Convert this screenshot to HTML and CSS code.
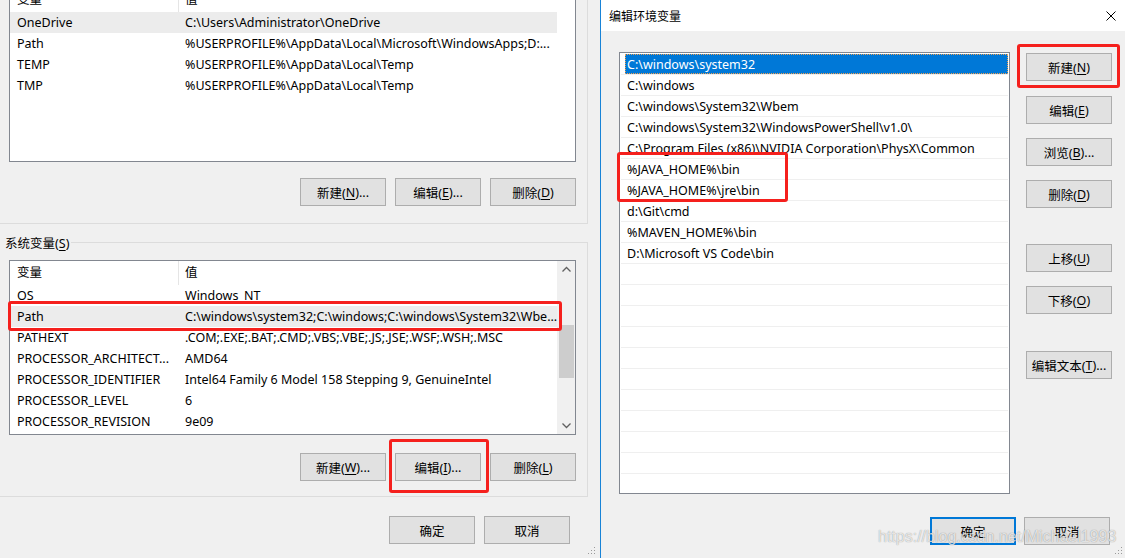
FILE: index.html
```html
<!DOCTYPE html>
<html lang="zh-CN">
<head>
<meta charset="utf-8">
<title>编辑环境变量</title>
<link rel="stylesheet" href="styles.css">
</head>
<body>
<div class="left">
  <div class="group group-user">
    <div class="lv">
      <div class="lv-main">
        <div class="lv-head"><span class="c1 hd">变量</span><span class="c2">值</span></div>
        <div class="lv-row hl"><span class="c1">OneDrive</span><span class="c2">C:\Users\Administrator\OneDrive</span></div>
        <div class="lv-row"><span class="c1">Path</span><span class="c2">%USERPROFILE%\AppData\Local\Microsoft\WindowsApps;D:...</span></div>
        <div class="lv-row"><span class="c1">TEMP</span><span class="c2">%USERPROFILE%\AppData\Local\Temp</span></div>
        <div class="lv-row"><span class="c1">TMP</span><span class="c2">%USERPROFILE%\AppData\Local\Temp</span></div>
      </div>
      <div class="vs-empty"></div>
    </div>
    <div class="btnrow">
      <div class="btn">新建(<u>N</u>)...</div>
      <div class="btn">编辑(<u>E</u>)...</div>
      <div class="btn">删除(<u>D</u>)</div>
    </div>
  </div>

  <div class="group group-sys">
    <div class="legend"><span class="legend-text">系统变量(<u>S</u>)</span><span class="legend-line"></span></div>
    <div class="lv">
      <div class="lv-main">
        <div class="lv-head"><span class="c1 hd">变量</span><span class="c2">值</span></div>
        <div class="lv-row"><span class="c1">OS</span><span class="c2">Windows_NT</span></div>
        <div class="lv-row hl"><span class="c1">Path</span><span class="c2">C:\windows\system32;C:\windows;C:\windows\System32\Wbe...</span></div>
        <div class="lv-row"><span class="c1">PATHEXT</span><span class="c2">.COM;.EXE;.BAT;.CMD;.VBS;.VBE;.JS;.JSE;.WSF;.WSH;.MSC</span></div>
        <div class="lv-row"><span class="c1">PROCESSOR_ARCHITECT...</span><span class="c2">AMD64</span></div>
        <div class="lv-row"><span class="c1">PROCESSOR_IDENTIFIER</span><span class="c2">Intel64 Family 6 Model 158 Stepping 9, GenuineIntel</span></div>
        <div class="lv-row"><span class="c1">PROCESSOR_LEVEL</span><span class="c2">6</span></div>
        <div class="lv-row"><span class="c1">PROCESSOR_REVISION</span><span class="c2">9e09</span></div>
      </div>
      <div class="vscroll">
        <div class="vs-arrow"><svg width="17" height="17" viewBox="0 0 17 17"><polyline points="4.5,10.5 8.5,6.5 12.5,10.5" fill="none" stroke="#606060" stroke-width="1.3"/></svg></div>
        <div class="vs-track"><div class="vs-thumb"></div></div>
        <div class="vs-arrow"><svg width="17" height="17" viewBox="0 0 17 17"><polyline points="4.5,6.5 8.5,10.5 12.5,6.5" fill="none" stroke="#606060" stroke-width="1.3"/></svg></div>
      </div>
    </div>
    <div class="btnrow">
      <div class="btn">新建(<u>W</u>)...</div>
      <div class="btn">编辑(<u>I</u>)...</div>
      <div class="btn">删除(<u>L</u>)</div>
    </div>
  </div>

  <div class="actions">
    <div class="btn">确定</div>
    <div class="btn">取消</div>
  </div>
  <svg class="grip grip-left" width="8" height="8" viewBox="0 0 8 8"><rect x="6" y="0" width="1" height="1" fill="#9a9a9a"/><rect x="3" y="3" width="1" height="1" fill="#9a9a9a"/><rect x="6" y="3" width="1" height="1" fill="#9a9a9a"/><rect x="0" y="6" width="1" height="1" fill="#9a9a9a"/><rect x="3" y="6" width="1" height="1" fill="#9a9a9a"/><rect x="6" y="6" width="1" height="1" fill="#9a9a9a"/></svg>

  <div class="mark mark-path"></div>
  <div class="mark mark-edit"></div>
</div>

<div class="dialog">
  <div class="titlebar">
    <span class="title">编辑环境变量</span>
    <svg class="close" width="10" height="10" viewBox="0 0 10 10"><path d="M0.5 0.5 L9.5 9.5 M9.5 0.5 L0.5 9.5" stroke="#000" stroke-width="1"/></svg>
  </div>
  <div class="dlg-body">
    <div class="dlg-list">
      <div class="row sel"><span class="t">C:\windows\system32</span></div>
      <div class="row"><span class="t">C:\windows</span></div>
      <div class="row"><span class="t">C:\windows\System32\Wbem</span></div>
      <div class="row"><span class="t">C:\windows\System32\WindowsPowerShell\v1.0\</span></div>
      <div class="row"><span class="t">C:\Program Files (x86)\NVIDIA Corporation\PhysX\Common</span></div>
      <div class="row"><span class="t">%JAVA_HOME%\bin</span></div>
      <div class="row"><span class="t">%JAVA_HOME%\jre\bin</span></div>
      <div class="row"><span class="t">d:\Git\cmd</span></div>
      <div class="row"><span class="t">%MAVEN_HOME%\bin</span></div>
      <div class="row"><span class="t">D:\Microsoft VS Code\bin</span></div>
      <div class="row"></div>
      <div class="row"></div>
      <div class="row"></div>
      <div class="row"></div>
      <div class="row"></div>
      <div class="row"></div>
      <div class="row"></div>
      <div class="row"></div>
      <div class="row"></div>
      <div class="row"></div>
      <div class="row"></div>
    </div>
    <div class="side">
      <div class="btn">新建(<u>N</u>)</div>
      <div class="btn gap-1">编辑(<u>E</u>)</div>
      <div class="btn">浏览(<u>B</u>)...</div>
      <div class="btn">删除(<u>D</u>)</div>
      <div class="btn gap-big">上移(<u>U</u>)</div>
      <div class="btn">下移(<u>O</u>)</div>
      <div class="btn gap-big2">编辑文本(<u>T</u>)...</div>
    </div>
  </div>
  <div class="dlg-actions">
    <div class="btn default">确定</div>
    <div class="btn">取消</div>
  </div>
  <svg class="grip grip-right" width="8" height="8" viewBox="0 0 8 8"><rect x="6" y="0" width="1" height="1" fill="#9a9a9a"/><rect x="3" y="3" width="1" height="1" fill="#9a9a9a"/><rect x="6" y="3" width="1" height="1" fill="#9a9a9a"/><rect x="0" y="6" width="1" height="1" fill="#9a9a9a"/><rect x="3" y="6" width="1" height="1" fill="#9a9a9a"/><rect x="6" y="6" width="1" height="1" fill="#9a9a9a"/></svg>
  <div class="watermark">https://blog.csdn.net/Michael1993</div>
  <div class="mark mark-java"></div>
  <div class="mark mark-new"></div>
</div>
</body>
</html>
```

FILE: styles.css
```css
* { box-sizing: border-box; }

html, body {
  margin: 0;
  padding: 0;
}

body {
  width: 1125px;
  height: 558px;
  overflow: hidden;
  display: flex;
  background: #f0f0f0;
  color: #000;
  font-family: "Noto Sans", "Noto Sans CJK SC", sans-serif;
  font-size: 12.5px;
}

u { text-decoration: underline; text-underline-offset: 2px; }

/* ---------- left window ---------- */
.left {
  width: 600px;
  flex: none;
  position: relative;
  background: #f0f0f0;
}

.group {
  width: 588px;
  border-right: 1px solid #dcdcdc;
  border-bottom: 1px solid #dcdcdc;
  padding-left: 9px;
}

.group-user {
  margin-top: -13px;
  padding-bottom: 17px;
}

.group-sys {
  display: flex;
  flex-direction: column;
  margin-top: 18px;
  padding-bottom: 15px;
}

.legend {
  height: 20px;
  margin-top: -10px;
  margin-left: -4px;
  display: flex;
  align-items: center;
}
.legend-text { padding-right: 2px; white-space: nowrap; }
.legend-line { flex: 1; height: 1px; background: #dcdcdc; }

.group-sys .lv { margin-top: 8px; }

.lv {
  width: 567px;
  height: 175px;
  border: 1px solid #828790;
  background: #fff;
  display: flex;
}

.lv-main {
  width: 547px;
  overflow: hidden;
}

.lv-head, .lv-row {
  display: grid;
  grid-template-columns: 169px 1fr;
  white-space: nowrap;
}

.lv-head { height: 24px; line-height: 24px; }
.lv-row { height: 21px; line-height: 21px; }
.lv-row.hl { background: #ececec; }

.c1 { padding-left: 7px; overflow: hidden; }
.c2 { padding-left: 6px; overflow: hidden; }
.c1.hd { border-right: 1px solid #e5e5e5; }

.vs-empty { width: 18px; }

.vscroll {
  width: 18px;
  display: flex;
  flex-direction: column;
  background: #f0f0f0;
  padding-left: 1px;
}
.vs-arrow { height: 17px; display: flex; }
.vs-track { flex: 1; padding-top: 47px; }
.vs-thumb { width: 15px; height: 53px; margin-left: 1px; background: #cdcdcd; }

.btnrow {
  display: flex;
  justify-content: flex-end;
  gap: 9px;
  margin-top: 16px;
  padding-right: 11px;
}
.group-sys .btnrow { margin-top: 18px; }

.btn {
  width: 86px;
  height: 28px;
  flex: none;
  border: 1px solid #adadad;
  background: #e1e1e1;
  display: flex;
  align-items: center;
  justify-content: center;
  white-space: nowrap;
}

.actions {
  display: flex;
  justify-content: flex-end;
  gap: 9px;
  margin-top: 19px;
  padding-right: 30px;
}

.grip { position: absolute; }
.grip-left { right: 4px; bottom: 3px; }
.grip-right { right: 2px; bottom: 3px; }

/* red annotation boxes */
.mark {
  position: absolute;
  border: 3px solid #f5201d;
  border-radius: 3px;
}
.mark-path { left: 8px; top: 301px; width: 554px; height: 30px; }
.mark-edit { left: 389px; top: 439px; width: 100px; height: 54px; }
.mark-java { left: 16px; top: 152px; width: 171px; height: 50px; }
.mark-new  { left: 416px; top: 44px; width: 103px; height: 44px; }

/* ---------- right dialog ---------- */
.dialog {
  width: 525px;
  flex: none;
  position: relative;
  border-left: 1px solid #1883d7;
  background: #f0f0f0;
  display: flex;
  flex-direction: column;
}

.titlebar {
  height: 31px;
  background: #fff;
  display: flex;
  align-items: center;
  padding-left: 8px;
  padding-right: 9px;
  font-size: 12px;
}
.title { flex: 1; }
.close { display: block; }

.dlg-body {
  display: flex;
  align-items: flex-start;
  padding: 21px 0 0 18px;
}

.dlg-list {
  width: 391px;
  height: 442px;
  border: 1px solid #828790;
  background: #fff;
  padding-top: 1px;
  overflow: hidden;
}

.row {
  height: 21px;
  margin: 0 1px;
  padding-left: 4px;
  border-bottom: 1px solid #efefef;
  white-space: nowrap;
}
.row .t {
  display: block;
  height: 20px;
  padding-top: 2px;
  line-height: 18px;
  padding-left: 2px;
}
.row.sel .t {
  background: #0078d7;
  color: #fff;
  outline: 1px dotted #f0a050;
  outline-offset: -1px;
}

.side {
  margin-left: 16px;
  margin-top: 1px;
  display: flex;
  flex-direction: column;
  gap: 14px;
}
.side .gap-1 { margin-top: 1px; }
.side .gap-big { margin-top: 22px; }
.side .gap-big2 { margin-top: 23px; }

.dlg-actions {
  display: flex;
  justify-content: flex-end;
  gap: 8px;
  margin-top: 23px;
  padding-right: 15px;
}
.btn.default { border: 2px solid #0078d7; }

.watermark {
  position: absolute;
  left: 277px;
  top: 527px;
  font-family: "Liberation Sans", Arial, sans-serif;
  font-size: 16px;
  line-height: 20px;
  color: rgba(255, 255, 255, 0.75);
  text-shadow: 0 0 1px rgba(0, 0, 0, 0.45);
  white-space: nowrap;
}
```
